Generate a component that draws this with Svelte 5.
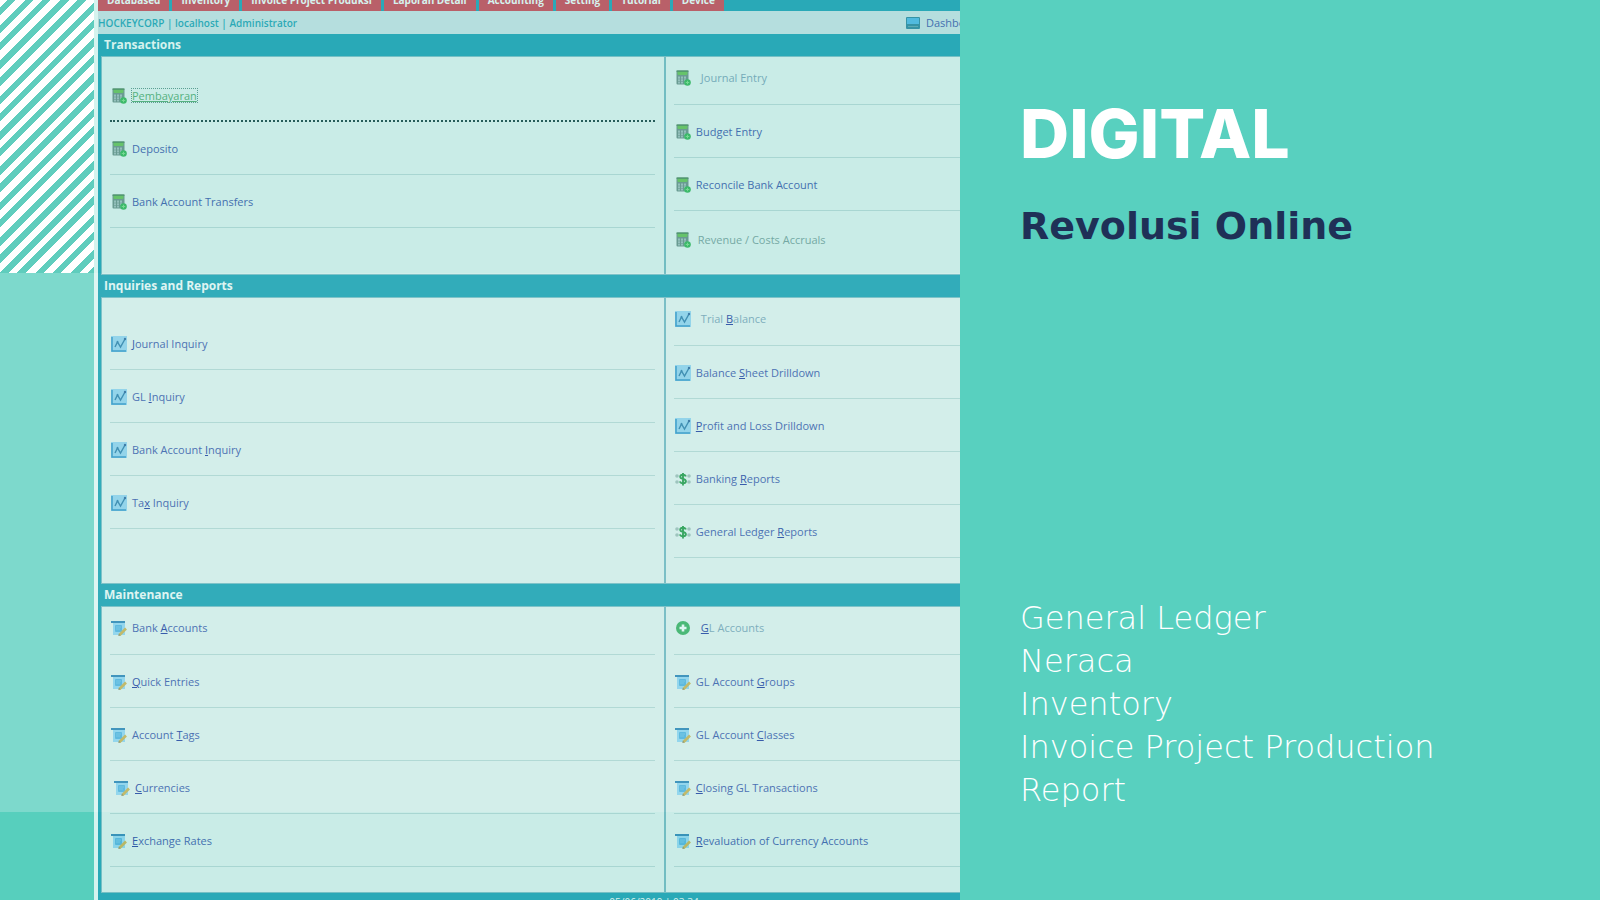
<script lang="ts">
  type IconName = 'calc' | 'chart' | 'money' | 'form' | 'add';

  interface Entry {
    icon: IconName;
    // an underscore goes before the access key letter
    label: string;
    state?: 'focused' | 'muted' | 'off' | 'inset';
  }

  interface Section {
    title: string;
    lead: 'none' | 'small' | 'large';
    left: Entry[];
    right: Entry[];
  }

  const tabs = [
    'Databased',
    'Inventory',
    'Invoice Project Produksi',
    'Laporan Detail',
    'Accounting',
    'Setting',
    'Tutorial',
    'Device'
  ];

  const sections: Section[] = [
    {
      title: 'Transactions',
      lead: 'small',
      left: [
        { icon: 'calc', label: 'Pembayaran', state: 'focused' },
        { icon: 'calc', label: 'Deposito' },
        { icon: 'calc', label: 'Bank Account Transfers' }
      ],
      right: [
        { icon: 'calc', label: 'Journal Entry', state: 'muted' },
        { icon: 'calc', label: 'Budget Entry' },
        { icon: 'calc', label: 'Reconcile Bank Account' },
        { icon: 'calc', label: 'Revenue / Costs Accruals', state: 'off' }
      ]
    },
    {
      title: 'Inquiries and Reports',
      lead: 'large',
      left: [
        { icon: 'chart', label: '_Journal Inquiry' },
        { icon: 'chart', label: 'GL _Inquiry' },
        { icon: 'chart', label: 'Bank Account _Inquiry' },
        { icon: 'chart', label: 'Ta_x Inquiry' }
      ],
      right: [
        { icon: 'chart', label: 'Trial _Balance', state: 'muted' },
        { icon: 'chart', label: 'Balance _Sheet Drilldown' },
        { icon: 'chart', label: '_Profit and Loss Drilldown' },
        { icon: 'money', label: 'Banking _Reports' },
        { icon: 'money', label: 'General Ledger _Reports' }
      ]
    },
    {
      title: 'Maintenance',
      lead: 'none',
      left: [
        { icon: 'form', label: 'Bank _Accounts' },
        { icon: 'form', label: '_Quick Entries' },
        { icon: 'form', label: 'Account _Tags' },
        { icon: 'form', label: '_Currencies', state: 'inset' },
        { icon: 'form', label: '_Exchange Rates' }
      ],
      right: [
        { icon: 'add', label: '_GL Accounts', state: 'muted' },
        { icon: 'form', label: 'GL Account _Groups' },
        { icon: 'form', label: 'GL Account _Classes' },
        { icon: 'form', label: '_Closing GL Transactions' },
        { icon: 'form', label: '_Revaluation of Currency Accounts' }
      ]
    }
  ];

  const features = ['General Ledger', 'Neraca', 'Inventory', 'Invoice Project Production', 'Report'];

  function splitKey(label: string) {
    const at = label.indexOf('_');
    if (at < 0) return { before: label, key: '', after: '' };
    return { before: label.slice(0, at), key: label[at + 1], after: label.slice(at + 2) };
  }
</script>

{#snippet icon(name: IconName)}
  <svg class="icon" viewBox="0 0 16 16" aria-hidden="true">
    {#if name === 'calc'}
      <rect x="1.500" y="0.500" width="12" height="14" rx="1" fill="#6f8a84" />
      <rect x="2.500" y="1.500" width="10" height="3.500" rx="1" fill="#6cc04f" />
      <rect x="1.500" y="0.500" width="12" height="1.200" fill="#47804a" />
      <path d="M3 6.500h2v7H3zM6 6.500h2v7H6zM9 6.500h2v7H9z" fill="#a9bcbc" />
      <path d="M2.500 9h9M2.500 11.500h9" stroke="#6f8a84" stroke-width=".6" />
      <circle cx="12.500" cy="12.500" r="3.300" fill="#34b44f" />
      <path d="M12.500 10.800v3.400M10.800 12.500h3.400" stroke="#7fdb84" />
    {:else if name === 'chart'}
      <rect width="16" height="16" fill="#9bd3f5" />
      <path d="M1 1v14h14" fill="none" stroke="#2f8fc9" stroke-width="1.500" />
      <path d="M4 11l2.500-5 3 5L14 3" fill="none" stroke="#2d78ab" stroke-width="1.400" />
      <circle cx="14" cy="3" r="1.200" fill="#2d5f9c" />
      <circle cx="6.500" cy="6" r="1" fill="#2d78ab" />
    {:else if name === 'money'}
      <g fill="#a9beba">
        <circle cx="2" cy="5" r="1.800" />
        <circle cx="2" cy="11" r="1.800" />
        <circle cx="14" cy="5" r="1.800" />
        <circle cx="14" cy="11" r="1.800" />
      </g>
      <path
        d="M10.800 5.500C10.500 4.200 9.500 3.700 8 3.700c-1.800 0-2.800.8-2.800 2C5.200 8.800 10.900 7 10.900 10.300c0 1.300-1.100 2.100-2.900 2.100-1.700 0-2.700-.7-3-2M8 2v12.500"
        fill="none"
        stroke="#23963f"
        stroke-width="1.900"
      />
    {:else if name === 'form'}
      <rect x="2" y="2" width="12" height="13" fill="#9bd6f8" />
      <rect x="0" y="1" width="14" height="2" fill="#2e7fb8" />
      <rect x="4" y="5" width="7" height="7" rx="1" fill="#55b0e6" />
      <path d="M5 7h5M5 9h4" stroke="#78c3ee" />
      <path d="M8.500 15L15 8.500" stroke="#d9b04a" stroke-width="2.600" />
      <path d="M7.300 16l.6-2.200 1.600 1.600z" fill="#8e7b4b" />
    {:else}
      <circle cx="8" cy="8" r="7" fill="#3aae5b" />
      <path d="M8 4.500v7M4.500 8h7" stroke="#fff" stroke-width="2.600" />
    {/if}
  </svg>
{/snippet}

{#snippet column(entries: Entry[])}
  <ul class="column">
    {#each entries as entry (entry.label)}
      {@const text = splitKey(entry.label)}
      <li class={['row', entry.state]}>
        {@render icon(entry.icon)}
        <a href="#menu">{text.before}{#if text.key}<u>{text.key}</u>{/if}{text.after}</a>
      </li>
    {/each}
  </ul>
{/snippet}

<main class="slide">
  <div class="stage">
    <div class="hatch"></div>

    <div class="window">
      <nav class="tabs">
        {#each tabs as tab (tab)}
          <a href="#tab">{tab}</a>
        {/each}
      </nav>

      <div class="status">
        <strong>HOCKEYCORP | localhost | Administrator</strong>
        <a class="dashboard" href="#dashboard">
          <svg viewBox="0 0 14 14" aria-hidden="true">
            <rect y="1" width="14" height="12" rx="1" fill="#2b7f9e" />
            <rect x="1" y="2" width="12" height="6" fill="#50b4ea" />
            <path d="M2 10.500h10" stroke="#5f9fb0" />
          </svg>
          Dashboard
        </a>
      </div>

      {#each sections as section (section.title)}
        <section>
          <h2>{section.title}</h2>
          <div class={['panel', `lead-${section.lead}`]}>
            {@render column(section.left)}
            {@render column(section.right)}
          </div>
        </section>
      {/each}

      <footer>05/06/2019 | 03:34</footer>
    </div>
  </div>

  <aside>
    <h1>DIGITAL</h1>
    <p class="tagline">Revolusi Online</p>
    <ul class="features">
      {#each features as feature (feature)}
        <li>{feature}</li>
      {/each}
    </ul>
  </aside>
</main>

<style>
  :global(body) {
    margin: 0;
    background: #58d0bf;
  }

  .slide {
    display: flex;
    height: 100vh;
    overflow: hidden;
    background: #58d0bf;
    font-family: 'Open Sans', 'Noto Sans', sans-serif;
  }

  ul {
    margin: 0;
    padding: 0;
    list-style: none;
  }

  a {
    color: #3c50ac;
    text-decoration: none;
  }

  .stage {
    position: relative;
    flex: 0 0 60%;
    box-sizing: border-box;
    min-width: 0;
    padding-left: 94px;
    overflow: hidden;
    background: linear-gradient(#57cfbd 273px, #7dd9cc 273px 812px, #57cfbd 812px);
  }

  .hatch {
    position: absolute;
    top: 0;
    left: 0;
    width: 94px;
    height: 273px;
    background: repeating-linear-gradient(
      135deg,
      #fff 0 5px,
      #5fcdbd 5px 11px,
      #fff 11px 18px,
      #5fcdbd 18px 24px,
      #fff 24px 25px
    );
  }

  /* the app window lets the coloured bands shine through */
  .window {
    min-height: 100%;
    border-left: 4px solid #fff;
    background: #1a9db5;
    opacity: 0.75;
  }

  .tabs {
    display: flex;
    gap: 3px;
    margin-top: -12px;
  }

  .tabs a {
    padding: 5px 9px 3px;
    background: #da3c4e;
    color: #fff;
    font-size: 10px;
    font-weight: 700;
    line-height: 15px;
    white-space: nowrap;
  }

  .status {
    display: flex;
    align-items: center;
    height: 23px;
    background: #d5e4e9;
    color: #1a9db5;
    font-size: 11px;
    white-space: nowrap;
  }

  .status strong {
    font-size: 10px;
    font-weight: 600;
  }

  .dashboard {
    display: flex;
    align-items: center;
    gap: 6px;
    width: 54px;
    margin-left: auto;
  }

  .dashboard svg {
    flex: none;
    width: 14px;
    height: 14px;
  }

  h2 {
    margin: 0;
    padding-left: 6px;
    color: #fff;
    font-size: 12px;
    font-weight: 700;
    line-height: 22px;
  }

  .panel {
    display: grid;
    grid-template-columns: minmax(0, 23fr) minmax(0, 12fr);
    margin-left: 3px;
    border: 1px solid #7fbcc8;
    border-right: 0;
    background: #f0f6f5;
  }

  .column {
    padding: 0 0 25px 8px;
  }

  .column:first-child {
    padding-right: 9px;
    border-right: 2px solid #7bb7c4;
  }

  .lead-small .column {
    padding-bottom: 10px;
  }

  .lead-small .column:first-child {
    padding-top: 12px;
  }

  .lead-large .column:first-child {
    padding-top: 19px;
  }

  .row {
    display: flex;
    align-items: center;
    gap: 5px;
    box-sizing: border-box;
    height: 53px;
    padding: 2px 0 0 1px;
    border-bottom: 1px solid #c3d9d9;
    font-size: 11px;
    line-height: 16px;
    white-space: nowrap;
  }

  .column:last-child .row:first-child,
  .lead-none .row:first-child {
    height: 48px;
    padding-top: 0;
    padding-bottom: 5px;
  }

  .icon {
    flex: none;
    width: 16px;
    height: 16px;
  }

  u {
    color: #2233a0;
  }

  .muted a {
    padding-left: 5px;
    color: #7fa0b8;
  }

  .off {
    padding-top: 5px;
    border-bottom: 0;
  }

  .off a {
    padding-left: 2px;
    color: #7f9c9c;
  }

  .inset {
    padding-left: 4px;
  }

  .focused {
    border-bottom: 2px dotted #16383a;
  }

  .focused a {
    color: #55a86c;
    line-height: 13px;
    text-decoration: underline;
    outline: 1px dotted #5d8f86;
  }

  footer {
    padding: 2px 0 0 29%;
    color: #fff;
    font-size: 10px;
    line-height: 14px;
    text-align: center;
  }

  aside {
    flex: 1;
    min-width: 0;
    padding: 92px 60px 0;
    color: #fff;
    font-family: Inter, sans-serif;
  }

  h1 {
    margin: 0;
    font-size: 68px;
    font-weight: 800;
    line-height: 82px;
  }

  .tagline {
    margin: 26px 0 0;
    color: #1f3057;
    font-family: 'DejaVu Sans', sans-serif;
    font-size: 38px;
    font-weight: 700;
    line-height: 52px;
  }

  .features {
    margin-top: 345px;
    font-family: 'DejaVu Sans', sans-serif;
    font-size: 32px;
    font-weight: 200;
    line-height: 43px;
  }
</style>
